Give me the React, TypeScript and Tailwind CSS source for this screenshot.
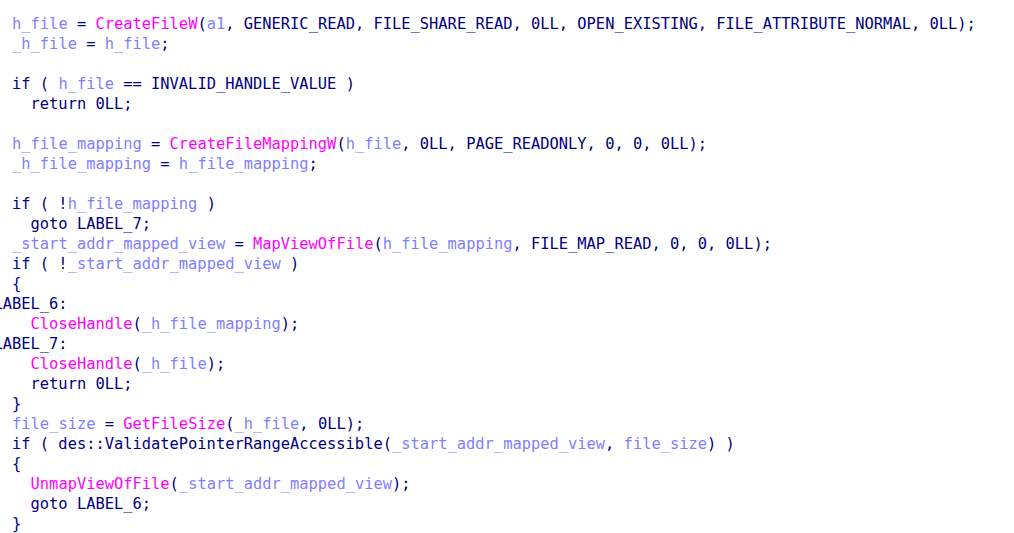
import React from "react";

type Seg = [string, "n" | "v" | "f"];

const C: Record<string, string> = {
  n: "text-[#000080]",
  v: "text-[#8080ff]",
  f: "text-[#ff00ff]",
};

const lines: Seg[][] = [
  [["  ", "n"], ["h_file", "v"], [" = ", "n"], ["CreateFileW", "f"], ["(", "n"], ["a1", "v"], [", GENERIC_READ, FILE_SHARE_READ, 0LL, OPEN_EXISTING, FILE_ATTRIBUTE_NORMAL, 0LL);", "n"]],
  [["  ", "n"], ["_h_file", "v"], [" = ", "n"], ["h_file", "v"], [";", "n"]],
  [],
  [["  if ( ", "n"], ["h_file", "v"], [" == INVALID_HANDLE_VALUE )", "n"]],
  [["    return 0LL;", "n"]],
  [],
  [["  ", "n"], ["h_file_mapping", "v"], [" = ", "n"], ["CreateFileMappingW", "f"], ["(", "n"], ["h_file", "v"], [", 0LL, PAGE_READONLY, 0, 0, 0LL);", "n"]],
  [["  ", "n"], ["_h_file_mapping", "v"], [" = ", "n"], ["h_file_mapping", "v"], [";", "n"]],
  [],
  [["  if ( !", "n"], ["h_file_mapping", "v"], [" )", "n"]],
  [["    goto LABEL_7;", "n"]],
  [["  ", "n"], ["_start_addr_mapped_view", "v"], [" = ", "n"], ["MapViewOfFile", "f"], ["(", "n"], ["h_file_mapping", "v"], [", FILE_MAP_READ, 0, 0, 0LL);", "n"]],
  [["  if ( !", "n"], ["_start_addr_mapped_view", "v"], [" )", "n"]],
  [["  {", "n"]],
  [["LABEL_6:", "n"]],
  [["    ", "n"], ["CloseHandle", "f"], ["(", "n"], ["_h_file_mapping", "v"], [");", "n"]],
  [["LABEL_7:", "n"]],
  [["    ", "n"], ["CloseHandle", "f"], ["(", "n"], ["_h_file", "v"], [");", "n"]],
  [["    return 0LL;", "n"]],
  [["  }", "n"]],
  [["  ", "n"], ["file_size", "v"], [" = ", "n"], ["GetFileSize", "f"], ["(", "n"], ["_h_file", "v"], [", 0LL);", "n"]],
  [["  if ( des::ValidatePointerRangeAccessible(", "n"], ["_start_addr_mapped_view", "v"], [", ", "n"], ["file_size", "v"], [") )", "n"]],
  [["  {", "n"]],
  [["    ", "n"], ["UnmapViewOfFile", "f"], ["(", "n"], ["_start_addr_mapped_view", "v"], [");", "n"]],
  [["    goto LABEL_6;", "n"]],
  [["  }", "n"]],
];

export default function App() {
  return (
    <div className="w-[1014px] h-[533px] bg-white overflow-hidden">
      <div
        className="pt-[14px] ml-[-6.5px] text-[15.4px] leading-[20px] whitespace-pre"
        style={{ fontFamily: '"DejaVu Sans Mono", "Liberation Mono", monospace' }}
      >
        {lines.map((l, i) => (
          <div key={i} className="min-h-[20px]">
            {l.map((s, j) => (
              <span key={j} className={C[s[1]]}>
                {s[0]}
              </span>
            ))}
          </div>
        ))}
      </div>
    </div>
  );
}
